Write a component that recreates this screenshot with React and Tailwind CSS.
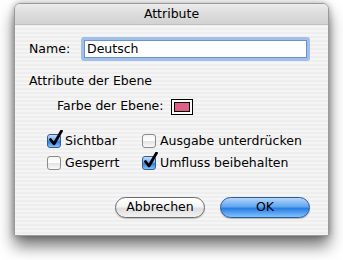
const font = { fontFamily: '"DejaVu Sans", "Noto Sans", sans-serif' }

function Check({ checked, label }) {
  return (
    <div className="flex items-center h-[18px]">
      <div className="relative w-[14px] h-[14px] shrink-0">
        <div
          className={
            checked
              ? 'w-[14px] h-[14px] rounded-[3px] border border-[#3a5a8c] bg-[linear-gradient(180deg,#c6defa_0%,#6eaaf0_45%,#2f7fe2_55%,#86c4fb_100%)]'
              : 'w-[14px] h-[14px] rounded-[3px] border border-[#8a8a8a] bg-[linear-gradient(180deg,#f4f4f4_0%,#ffffff_45%,#e4e4e4_55%,#fafafa_100%)]'
          }
        />
        {checked && (
          <svg className="absolute left-[1px] top-[-4px]" width="15" height="17" viewBox="0 0 15 17">
            <path d="M2.5 9.5 L6 14 L13.5 1" fill="none" stroke="#000" strokeWidth="2.8" strokeLinecap="round" strokeLinejoin="round" />
          </svg>
        )}
      </div>
      <span className="ml-[4px] leading-none">{label}</span>
    </div>
  )
}

export default function App() {
  return (
    <div className="w-[343px] h-[260px] bg-white overflow-hidden text-[12.5px] text-black" style={font}>
      <div className="ml-[14px] mt-[3px] w-[315px] h-[233px] rounded-t-[6px] border border-[#9a9a9a] shadow-[0_10px_16px_rgba(0,0,0,0.55),0_0_6px_rgba(0,0,0,0.3)] overflow-hidden flex flex-col bg-[repeating-linear-gradient(180deg,#eeeeee_0px,#eeeeee_2px,#f5f5f5_2px,#f5f5f5_4px)]">
        {/* title bar */}
        <div className="h-[21px] shrink-0 flex items-center justify-center border-b border-[#bfbfbf] bg-[linear-gradient(180deg,#ececec_0%,#dcdcdc_50%,#d2d2d2_100%)]">
          <span className="leading-none">Attribute</span>
        </div>

        <div className="pt-[12px] pl-[14px] pr-[18px] flex flex-col">
          <div className="flex items-center h-[24px]">
            <span className="w-[52px] shrink-0 leading-none">Name:</span>
            <div className="flex-1 h-[24px] rounded-[3px] bg-[#a0c0ea] p-[3px]">
              <div className="h-full bg-white border border-[#6a93cd] flex items-center pl-[2px] leading-none">
                Deutsch
              </div>
            </div>
          </div>

          <div className="mt-[12px] h-[16px] flex items-center leading-none">Attribute der Ebene</div>

          <div className="mt-[9px] pl-[28px] h-[17px] flex items-center">
            <span className="w-[114px] shrink-0 leading-none">Farbe der Ebene:</span>
            <div className="w-[22px] h-[16px] border border-black bg-white p-[2px]">
              <div className="w-full h-full border border-black bg-[#df5f88]" />
            </div>
          </div>

          <div className="mt-[17px] pl-[18px] grid grid-cols-[95px_1fr] gap-y-[4px]">
            <Check checked label="Sichtbar" />
            <Check label="Ausgabe unterdrücken" />
            <Check label="Gesperrt" />
            <Check checked label="Umfluss beibehalten" />
          </div>

          <div className="mt-[25px] flex justify-end gap-[15px]">
            <div className="w-[90px] h-[21px] rounded-full border border-[#6a6a6a] flex items-center justify-center leading-none bg-[linear-gradient(180deg,#ffffff_0%,#f4f4f4_45%,#dedede_55%,#f2f2f2_100%)] shadow-[0_1px_1px_rgba(0,0,0,0.2)]">
              Abbrechen
            </div>
            <div className="w-[90px] h-[21px] rounded-full border border-[#2a5796] flex items-center justify-center leading-none bg-[linear-gradient(180deg,#b4d6fa_0%,#62a6f0_45%,#2a7ee3_55%,#7fc2ff_100%)] shadow-[0_1px_1px_rgba(0,0,0,0.25)]">
              OK
            </div>
          </div>
        </div>
      </div>
    </div>
  )
}
